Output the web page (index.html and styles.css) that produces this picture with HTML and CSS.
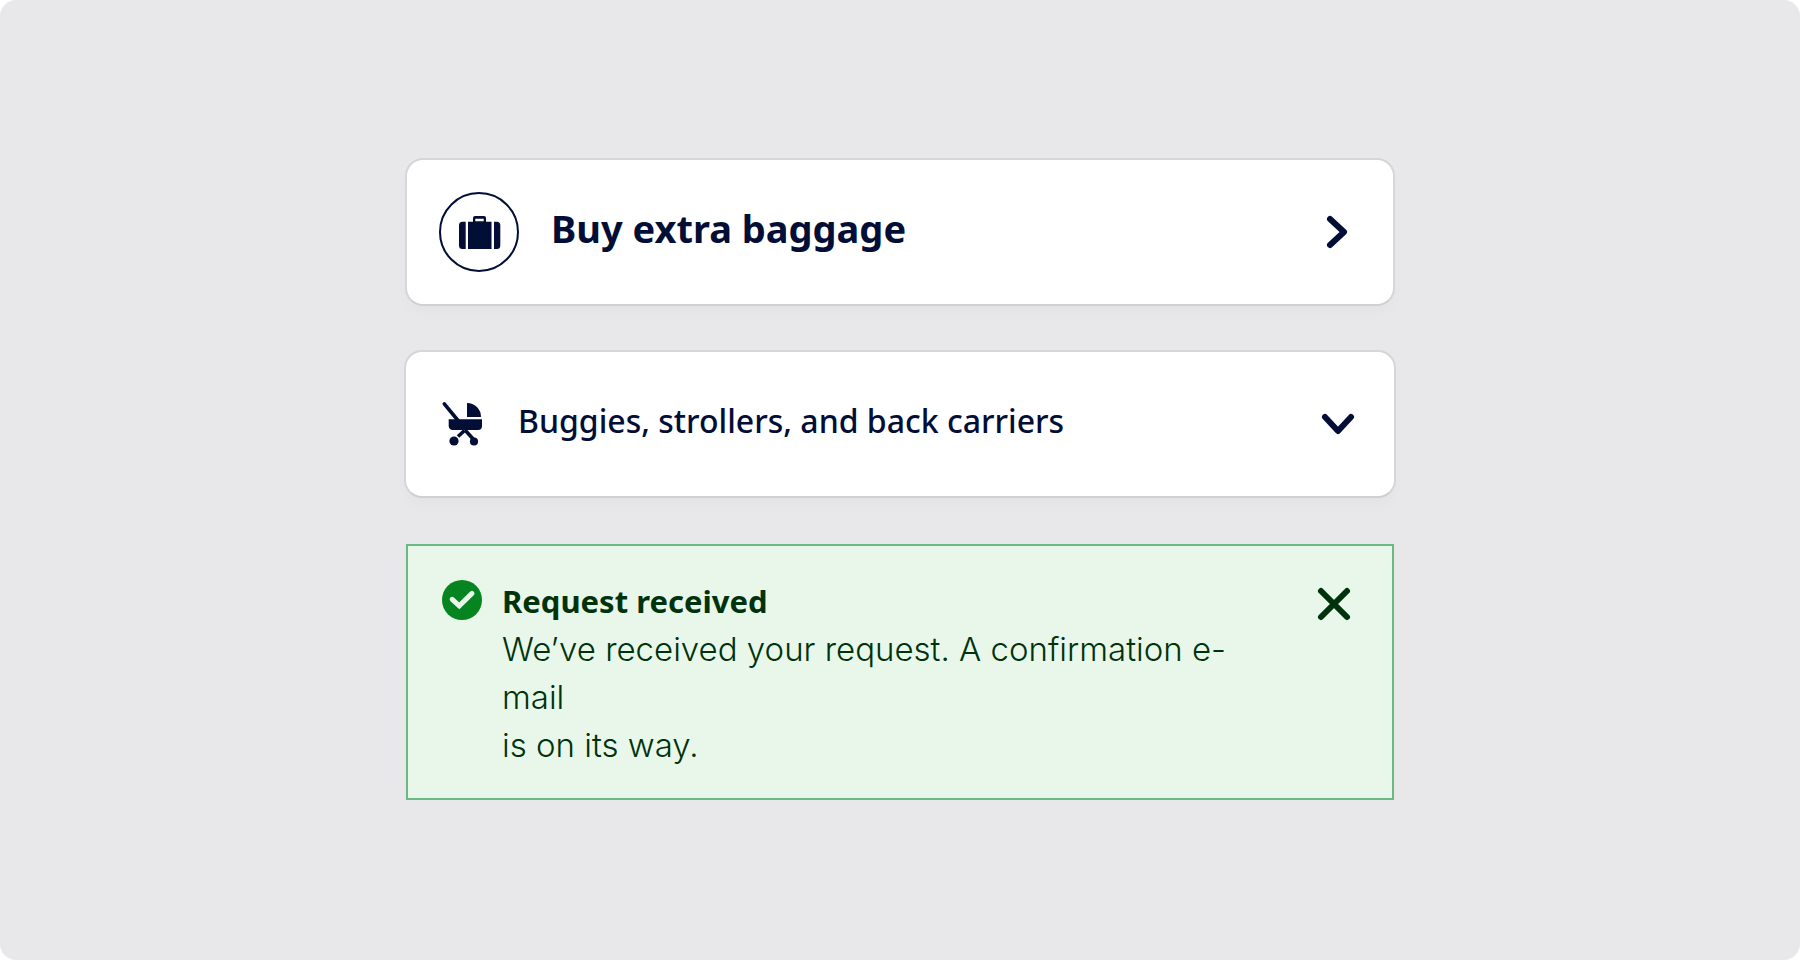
FILE: index.html
```html
<!DOCTYPE html>
<html lang="en">
<head>
<meta charset="utf-8">
<meta name="viewport" content="width=device-width, initial-scale=1">
<title>Extra baggage</title>
<link rel="stylesheet" href="styles.css">
</head>
<body>
<main class="stage">
  <div class="stack">
    <button class="card card-link" type="button">
      <svg class="badge" viewBox="0 0 80 80" aria-hidden="true">
        <circle cx="40" cy="40" r="39" fill="none" stroke="currentColor" stroke-width="2"/>
        <path fill="currentColor" d="M23.500 29.700H26.700V57H23.500A3.500 3.500 0 0 1 20 53.500V33.200A3.500 3.500 0 0 1 23.500 29.700ZM55 29.700H57.800A3.500 3.500 0 0 1 61.300 33.200V53.500A3.500 3.500 0 0 1 57.800 57H55ZM29 57V29.700H34V26A2 2 0 0 1 36 24H45A2 2 0 0 1 47 26V29.700H52.500V57ZM36.300 29.300H44.700V26.700H36.300Z"/>
      </svg>
      <span class="card-title">Buy extra baggage</span>
      <svg class="icon" viewBox="0 0 48 48" aria-hidden="true">
        <path class="stroke" d="M17 11L31 24L17 37"/>
      </svg>
    </button>

    <button class="card card-accordion" type="button" aria-expanded="false">
      <svg class="icon" viewBox="0 0 48 48" aria-hidden="true">
        <path fill="currentColor" d="M29 3A14 14 0 0 1 43 17H29ZM10.700 19.300H44V26A4 4 0 0 1 40 30H15A4 4 0 0 1 10.700 26Z"/>
        <path fill="none" stroke="currentColor" stroke-width="3.600" stroke-linecap="round" d="M6.300 3.800L20 20.500"/>
        <path fill="none" stroke="currentColor" stroke-width="3.600" d="M20 36.500L26.500 30.500M27 30L36 40"/>
        <circle cx="16" cy="41" r="4.600" fill="currentColor"/>
        <circle cx="36" cy="41.500" r="4.100" fill="currentColor"/>
      </svg>
      <span class="card-label">Buggies, strollers, and back carriers</span>
      <svg class="icon" viewBox="0 0 48 48" aria-hidden="true">
        <path class="stroke" d="M11 17L24 31L37 17"/>
      </svg>
    </button>

    <section class="alert" role="status">
      <svg class="icon alert-icon" viewBox="0 0 48 48" aria-hidden="true">
        <circle cx="24" cy="24" r="20" fill="currentColor"/>
        <path fill="none" stroke="#e8f7ea" stroke-width="5" stroke-linecap="round" d="M14.200 23.300L21.300 29.900L34 17.400"/>
      </svg>
      <div class="alert-body">
        <h2 class="alert-title">Request received</h2>
        <p class="alert-text">We’ve received your request. A confirmation e-mail<br>is on its way.</p>
      </div>
      <button class="close" type="button" aria-label="Close">
        <svg class="icon" viewBox="0 0 48 48" aria-hidden="true">
          <path class="stroke" d="M11 11L37 37M37 11L11 37"/>
        </svg>
      </button>
    </section>
  </div>
</main>
</body>
</html>
```
FILE: styles.css
```css
* {
  box-sizing: border-box;
}

body {
  margin: 0;
  background: #fff;
  font-family: "Noto Sans", "Open Sans", sans-serif;
}

.stage {
  min-height: 100vh;
  padding: 158px 24px;
  border-radius: 16px;
  background: #e8e8ea;
}

.stack {
  display: flex;
  flex-direction: column;
  max-width: 992px;
  margin: 0 auto;
}

.card {
  display: flex;
  align-items: center;
  gap: 32px;
  border: 2px solid #d6d6d8;
  border-bottom-color: #d0d0d1;
  border-radius: 18px;
  background: #fff;
  box-shadow: 0 8px 16px -4px rgba(0, 0, 0, 0.03);
  color: #020e36;
  font: inherit;
  text-align: left;
  cursor: pointer;
}

.card-link {
  margin: 0 1px 44px;
  padding: 32px;
}

.card-accordion {
  margin-bottom: 46px;
  padding: 48px 32px;
}

.card-title,
.card-label {
  flex: 1;
}

.card-title {
  padding-bottom: 8px;
  font-size: 38px;
  font-weight: 700;
  line-height: 48px;
}

.card-label {
  padding-bottom: 6px;
  font-size: 32px;
  font-weight: 500;
  line-height: 42px;
}

.badge {
  flex: none;
  width: 80px;
  height: 80px;
}

.icon {
  display: block;
  flex: none;
  width: 48px;
  height: 48px;
}

.stroke {
  fill: none;
  stroke: currentColor;
  stroke-width: 6px;
  stroke-linecap: round;
  stroke-linejoin: round;
}

.alert {
  display: flex;
  align-items: flex-start;
  gap: 16px;
  margin: 0 2px;
  padding: 30px 30px 29px;
  border: 2px solid #6dba80;
  background: #e8f7ea;
  color: #00330b;
}

.alert-icon {
  color: #05841f;
}

.alert-body {
  flex: 1;
  padding-top: 1px;
  padding-right: 48px;
  line-height: 48px;
}

.alert-title {
  margin: 0;
  font-size: 31px;
  font-weight: 700;
}

.alert-text {
  margin: 0;
  font-family: Inter, "Noto Sans", sans-serif;
  font-size: 33px;
  font-weight: 350;
}

.close {
  margin: 4px 4px 0 0;
  padding: 0;
  border: 0;
  background: none;
  color: inherit;
  cursor: pointer;
}
```
